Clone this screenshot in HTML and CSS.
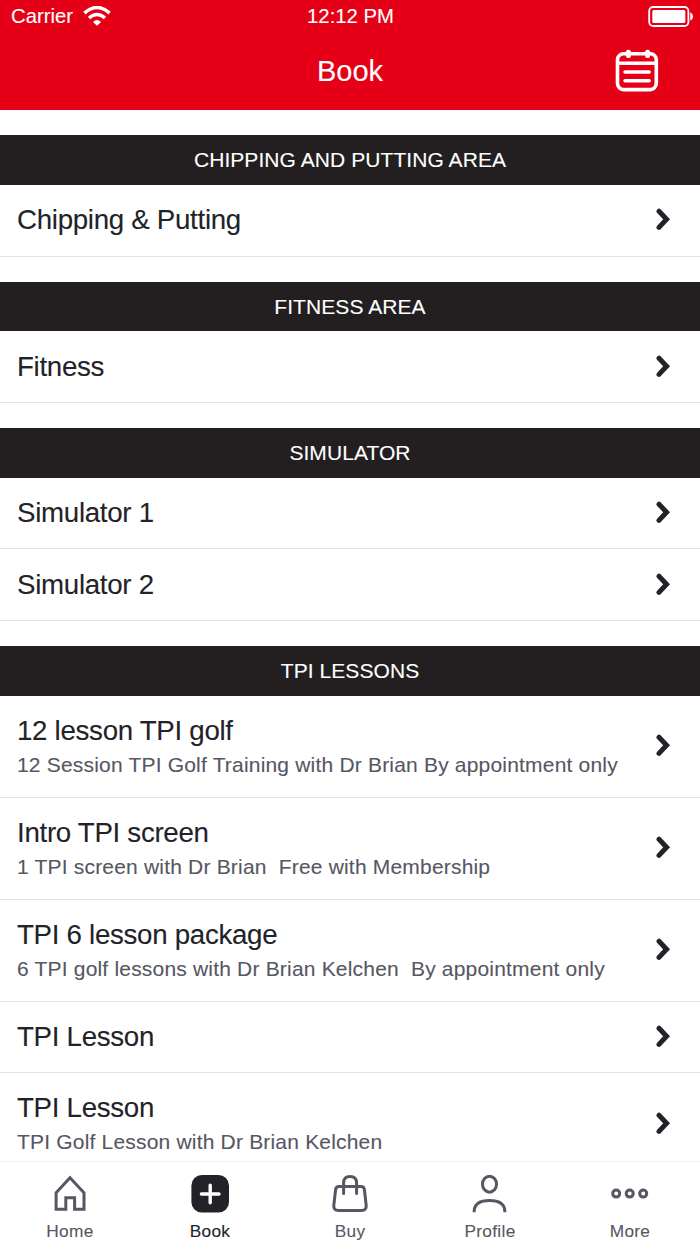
FILE: index.html
```html
<!DOCTYPE html>
<html lang="en">

<head>
    <meta charset="utf-8">
    <meta name="viewport" content="width=device-width, initial-scale=1">
    <title>Book</title>
    <link rel="stylesheet" href="styles.css">
</head>

<body>
    <svg class="sprite">
        <symbol id="chevron" viewBox="0 0 16 23">
            <path d="M4 3.2L11.6 11.3L4 19.4" fill="none" stroke="#212328" stroke-width="5" stroke-linejoin="miter" stroke-linecap="round" />
        </symbol>
    </svg>

    <header class="header">
        <div class="status">
            <div class="carrier">
                <span>Carrier</span>
                <svg class="wifi" width="28" height="20" viewBox="0 0 28 20">
                    <path d="M1.4 7.1Q14 -4.1 26.6 7.1" fill="none" stroke="#fff" stroke-width="3.5" />
                    <path d="M6 12Q14 5 22 12" fill="none" stroke="#fff" stroke-width="3.4" />
                    <path d="M10 16Q14 12.2 18 16L14 19.8Z" fill="#fff" />
                </svg>
            </div>
            <span class="time">12:12 PM</span>
            <svg class="battery" width="46" height="21" viewBox="0 0 46 21">
                <rect x="1.2" y="1" width="39.2" height="19" rx="4" fill="none" stroke="#fff" stroke-width="1.8" />
                <rect x="4.3" y="4" width="33" height="13" rx="1.5" fill="#fff" />
                <path d="M42.3 6.2Q45 7.4 45 10.5Q45 13.6 42.3 14.8Z" fill="#fff" />
            </svg>
        </div>
        <div class="titlebar">
            <h1>Book</h1>
            <svg class="calendar" width="44" height="44" viewBox="0 0 44 44" fill="none" stroke="#fff">
                <rect x="2.5" y="4.8" width="38.8" height="35.8" rx="6" stroke-width="3.6" />
                <path d="M2 14.2H42" stroke-width="3.4" />
                <path d="M10 23H34.2M10 31.7H34.2" stroke-width="3.5" stroke-linecap="round" />
                <path d="M13.4 3.2V6.4M32.6 3.2V6.4" stroke-width="5" stroke-linecap="round" />
            </svg>
        </div>
    </header>

    <main class="list">
        <section>
            <h2>CHIPPING AND PUTTING AREA</h2>
            <div class="row">
                <div class="name">Chipping &amp; Putting</div>
                <svg class="chevron"><use href="#chevron" /></svg>
            </div>
        </section>
        <section>
            <h2>FITNESS AREA</h2>
            <div class="row">
                <div class="name">Fitness</div>
                <svg class="chevron"><use href="#chevron" /></svg>
            </div>
        </section>
        <section>
            <h2>SIMULATOR</h2>
            <div class="row">
                <div class="name">Simulator 1</div>
                <svg class="chevron"><use href="#chevron" /></svg>
            </div>
            <div class="row">
                <div class="name">Simulator 2</div>
                <svg class="chevron"><use href="#chevron" /></svg>
            </div>
        </section>
        <section>
            <h2>TPI LESSONS</h2>
            <div class="row tall">
                <div class="text">
                    <div class="name">12 lesson TPI golf</div>
                    <div class="info">12 Session TPI Golf Training with Dr Brian By appointment only</div>
                </div>
                <svg class="chevron"><use href="#chevron" /></svg>
            </div>
            <div class="row tall">
                <div class="text">
                    <div class="name">Intro TPI screen</div>
                    <div class="info">1 TPI screen with Dr Brian&nbsp; Free with Membership</div>
                </div>
                <svg class="chevron"><use href="#chevron" /></svg>
            </div>
            <div class="row tall">
                <div class="text">
                    <div class="name">TPI 6 lesson package</div>
                    <div class="info">6 TPI golf lessons with Dr Brian Kelchen&nbsp; By appointment only</div>
                </div>
                <svg class="chevron"><use href="#chevron" /></svg>
            </div>
            <div class="row">
                <div class="name">TPI Lesson</div>
                <svg class="chevron"><use href="#chevron" /></svg>
            </div>
            <div class="row tall">
                <div class="text">
                    <div class="name">TPI Lesson</div>
                    <div class="info">TPI Golf Lesson with Dr Brian Kelchen</div>
                </div>
                <svg class="chevron"><use href="#chevron" /></svg>
            </div>
        </section>
    </main>

    <nav class="tabs">
        <a class="tab">
            <svg width="40" height="40" viewBox="0 0 40 40">
                <path d="M20 3.8L34 18.8V35.2H24.6V23.8H15.8V35.2H6.1V18.8Z" />
            </svg>
            <span>Home</span>
        </a>
        <a class="tab active">
            <svg width="40" height="40" viewBox="0 0 40 40">
                <rect x="1.4" y="1" width="37.6" height="37.6" rx="10.5" fill="#212328" stroke="none" />
                <path d="M20.2 11.2V28.8M11.4 20H29" stroke="#fff" stroke-width="3.4" stroke-linecap="round" />
            </svg>
            <span>Book</span>
        </a>
        <a class="tab">
            <svg width="40" height="40" viewBox="0 0 40 40">
                <path d="M9 12.5H31Q34 12.5 34.4 15.5L36.2 31.5Q36.6 36.6 31.5 36.6H8.5Q3.4 36.6 3.8 31.5L5.6 15.5Q6 12.5 9 12.5Z" />
                <path d="M13.6 19.5V9Q13.6 2.4 20 2.4Q26.6 2.4 26.6 9V19.5" stroke-linecap="round" />
            </svg>
            <span>Buy</span>
        </a>
        <a class="tab">
            <svg width="40" height="40" viewBox="0 0 40 40">
                <ellipse cx="19.5" cy="10.2" rx="7" ry="8" />
                <path d="M4.2 38.2V36.5Q5.2 26.6 19.5 26.6Q33.8 26.6 34.8 36.5V38.2" />
            </svg>
            <span>Profile</span>
        </a>
        <a class="tab">
            <svg width="40" height="40" viewBox="0 0 40 40">
                <circle cx="6.2" cy="19.6" r="3.5" />
                <circle cx="19.7" cy="19.6" r="3.5" />
                <circle cx="33.2" cy="19.6" r="3.5" />
            </svg>
            <span>More</span>
        </a>
    </nav>
</body>

</html>
```

FILE: styles.css
```css
* {
    box-sizing: border-box;
}

body {
    margin: 0;
    height: 1244px;
    display: flex;
    flex-direction: column;
    overflow: hidden;
    font-family: "Liberation Sans", Arial, sans-serif;
    background-color: #fff;
    color: #212328;
    -webkit-text-stroke: 0.1px;
}

.sprite {
    display: none;
}

.header {
    flex: none;
    height: 110px;
    background-color: #e60017;
    color: #fff;
}

.status {
    display: grid;
    grid-template-columns: 1fr auto 1fr;
    align-items: center;
    height: 32px;
    padding: 0 6px 0 11px;
    font-size: 20.3px;
    line-height: 32px;
}

.carrier {
    display: flex;
    align-items: center;
    gap: 10px;
}

.time {
    padding-right: 4px;
    line-height: 30px;
    padding-bottom: 1px;
}

.battery {
    justify-self: end;
}

.titlebar {
    display: grid;
    grid-template-columns: 1fr auto 1fr;
    align-items: center;
    height: 78px;
    padding-right: 41px;
    padding-left: 41px;
}

.titlebar h1 {
    grid-column: 2;
    margin: 0;
    font-size: 29px;
    font-weight: normal;
}

.calendar {
    justify-self: end;
}

.list {
    flex: 1;
    min-height: 0;
    overflow: hidden;
}

section {
    padding-top: 25.3px;
}

section:first-child {
    padding-top: 25.45px;
}

h2 {
    height: 49.6px;
    margin: 0;
    background-color: #231f20;
    color: #fff;
    font-size: 21px;
    font-weight: normal;
    line-height: 49px;
    letter-spacing: 0.07px;
    text-align: center;
}

.row {
    display: flex;
    align-items: center;
    justify-content: space-between;
    height: 71.5px;
    padding: 0 29px 0 17px;
    border-bottom: 1px solid #e2e2e4;
}

.tall {
    height: 102px;
}

.text {
    padding-top: 1px;
}

.name {
    font-size: 27.7px;
    line-height: 36px;
    letter-spacing: -0.3px;
}

.info {
    font-size: 21px;
    line-height: 32px;
    letter-spacing: 0.19px;
    color: #555762;
}

.chevron {
    width: 16px;
    height: 23px;
    margin-bottom: 1px;
}

.tabs {
    flex: none;
    display: flex;
    height: 83px;
    border-top: 1px solid #f2f2f3;
    background-color: #fff;
}

.tab {
    flex: 1;
    display: flex;
    flex-direction: column;
    align-items: center;
    padding-top: 12px;
    font-size: 17.3px;
    line-height: 20px;
    letter-spacing: 0.3px;
    color: #555762;
}

.tab svg {
    margin-bottom: 7px;
    fill: none;
    stroke: #555762;
    stroke-width: 3;
}

.active {
    color: #212328;
}
```
